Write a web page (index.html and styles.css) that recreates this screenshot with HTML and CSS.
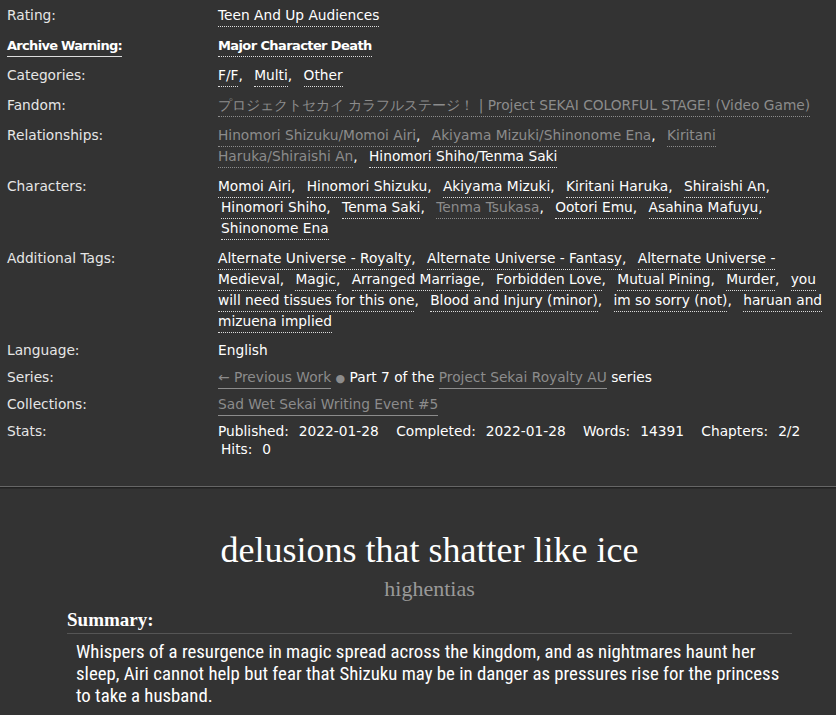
FILE: index.html
```html
<!DOCTYPE html>
<html lang="en">
<head>
<meta charset="UTF-8" />
<title>delusions that shatter like ice</title>
<link rel="stylesheet" href="styles.css">
</head>
<body>

<div class="wrapper">
  <dl class="meta">
    <dt class="tagrow">Rating:</dt>
    <dd class="tagrow">
      <ul class="tags"><li><a class="tag">Teen And Up Audiences</a></li></ul>
    </dd>

    <dt class="tagrow"><a class="help">Archive Warning:</a></dt>
    <dd class="tagrow warning">
      <ul class="tags"><li><a class="tag">Major Character Death</a></li></ul>
    </dd>

    <dt class="tagrow">Categories:</dt>
    <dd class="tagrow">
      <ul class="tags commas">
        <li><a class="tag">F/F</a></li>
        <li><a class="tag">Multi</a></li>
        <li><a class="tag">Other</a></li>
      </ul>
    </dd>

    <dt class="tagrow">Fandom:</dt>
    <dd class="tagrow">
      <ul class="tags"><li><a class="tag visited">プロジェクトセカイ カラフルステージ！ | Project SEKAI COLORFUL STAGE! (Video Game)</a></li></ul>
    </dd>

    <dt class="tagrow">Relationships:</dt>
    <dd class="tagrow">
      <ul class="tags commas">
        <li><a class="tag visited">Hinomori Shizuku/Momoi Airi</a></li>
        <li><a class="tag visited">Akiyama Mizuki/Shinonome Ena</a></li>
        <li><a class="tag visited">Kiritani Haruka/Shiraishi An</a></li>
        <li><a class="tag">Hinomori Shiho/Tenma Saki</a></li>
      </ul>
    </dd>

    <dt class="tagrow">Characters:</dt>
    <dd class="tagrow">
      <ul class="tags commas">
        <li><a class="tag">Momoi Airi</a></li>
        <li><a class="tag">Hinomori Shizuku</a></li>
        <li><a class="tag">Akiyama Mizuki</a></li>
        <li><a class="tag">Kiritani Haruka</a></li>
        <li><a class="tag">Shiraishi An</a></li>
        <li><a class="tag">Hinomori Shiho</a></li>
        <li><a class="tag">Tenma Saki</a></li>
        <li><a class="tag visited">Tenma Tsukasa</a></li>
        <li><a class="tag">Ootori Emu</a></li>
        <li><a class="tag">Asahina Mafuyu</a></li>
        <li><a class="tag">Shinonome Ena</a></li>
      </ul>
    </dd>

    <dt class="tagrow">Additional Tags:</dt>
    <dd class="tagrow">
      <ul class="tags commas">
        <li><a class="tag">Alternate Universe - Royalty</a></li>
        <li><a class="tag">Alternate Universe - Fantasy</a></li>
        <li><a class="tag">Alternate Universe - Medieval</a></li>
        <li><a class="tag">Magic</a></li>
        <li><a class="tag">Arranged Marriage</a></li>
        <li><a class="tag">Forbidden Love</a></li>
        <li><a class="tag">Mutual Pining</a></li>
        <li><a class="tag">Murder</a></li>
        <li><a class="tag">you will need tissues for this one</a></li>
        <li><a class="tag">Blood and Injury (minor)</a></li>
        <li><a class="tag">im so sorry (not)</a></li>
        <li><a class="tag">haruan and mizuena implied</a></li>
      </ul>
    </dd>

    <dt>Language:</dt>
    <dd>English</dd>

    <dt>Series:</dt>
    <dd>
      <a class="link">← Previous Work</a> <span class="divider">●</span> Part 7 of the <a class="link">Project Sekai Royalty AU</a> series
    </dd>

    <dt>Collections:</dt>
    <dd><a class="link">Sad Wet Sekai Writing Event #5</a></dd>

    <dt>Stats:</dt>
    <dd>
      <dl class="stats">
        <dt>Published:</dt><dd>2022-01-28</dd>
        <dt>Completed:</dt><dd>2022-01-28</dd>
        <dt>Words:</dt><dd>14391</dd>
        <dt>Chapters:</dt><dd>2/2</dd>
        <dt>Hits:</dt><dd>0</dd>
      </dl>
    </dd>
  </dl>
</div>

<div class="preface">
  <h2 class="title">delusions that shatter like ice</h2>
  <h3 class="byline">highentias</h3>
  <div class="summary">
    <h3 class="heading">Summary:</h3>
    <blockquote class="userstuff">
      <p>Whispers of a resurgence in magic spread across the kingdom, and as nightmares haunt her sleep, Airi cannot help but fear that Shizuku may be in danger as pressures rise for the princess to take a husband.</p>
    </blockquote>
  </div>
</div>

</body>
</html>
```

FILE: styles.css
```css
* {
  box-sizing: border-box;
}
body {
  margin: 0;
  background: #333;
  color: #fff;
  font-family: 'DejaVu Sans', Verdana, sans-serif;
  font-size: 13.75px;
}
a {
  color: #fff;
  text-decoration: none;
}
.wrapper {
  border-bottom: 1px solid #666;
  box-shadow: 0 1px 0 #222, 0 2px 0 #2a2a2a;
}
.meta {
  margin: 0;
  padding: 5px 10px 28px 7px;
  display: grid;
  grid-template-columns: 211px 1fr;
  row-gap: 9px;
  line-height: 18px;
}
.meta > dt {
  color: #e6e6e6;
}
.meta > dd {
  margin: 0;
}
.meta .tagrow {
  line-height: 21px;
}
.help {
  font-weight: bold;
  font-size: 13px;
  letter-spacing: -0.7px;
  color: #fff;
  border-bottom: 1px solid #ddd;
  padding-bottom: 3px;
}
.tags {
  margin: 0;
  padding: 0;
  list-style: none;
}
.tags li {
  display: inline;
  margin-right: 4px;
}
.tags li + li {
  padding-left: 3px;
}
.commas li::after {
  content: ",";
}
.commas li:last-child::after {
  content: "";
}
.tag {
  border-bottom: 1px dotted #ddd;
  padding-bottom: 3px;
}
.tag.visited {
  color: #8c8c8c;
  border-bottom-color: #8c8c8c;
}
.warning .tag {
  font-weight: bold;
  font-size: 13px;
  letter-spacing: -0.6px;
}
.link {
  color: #8c8c8c;
  border-bottom: 1px solid #8c8c8c;
  padding-bottom: 3px;
}
.divider {
  color: #8c8c8c;
  font-size: 11px;
  line-height: 0;
}
.stats {
  margin: 0;
  display: inline;
}
.stats dt,
.stats dd {
  display: inline;
  margin: 0;
}
.stats dt {
  margin-left: 3px;
}
.stats dt:first-child {
  margin-left: 0;
}
.stats dd {
  margin-left: 10px;
  margin-right: 10px;
}
.preface {
  margin: 0 44px 0 67px;
  padding-top: 41px;
}
.title {
  margin: 0;
  text-align: center;
  font-family: 'Liberation Serif', Georgia, serif;
  font-weight: normal;
  font-size: 36px;
  line-height: 44px;
}
.byline {
  margin: 4px 0 0;
  text-align: center;
  font-family: 'Liberation Serif', Georgia, serif;
  font-weight: normal;
  font-size: 22px;
  line-height: 26px;
  color: #999;
}
.summary .heading {
  margin: 7px 0 0;
  font-family: 'Liberation Serif', Georgia, serif;
  font-size: 19px;
  line-height: 22px;
  font-weight: bold;
  border-bottom: 1px solid #555;
  padding-bottom: 2px;
}
.userstuff {
  margin: 7px 0 0 9px;
  font-family: 'Liberation Sans Narrow', 'Roboto Condensed', sans-serif;
  font-size: 18.8px;
  line-height: 22px;
}
.userstuff p {
  margin: 0;
}
```
